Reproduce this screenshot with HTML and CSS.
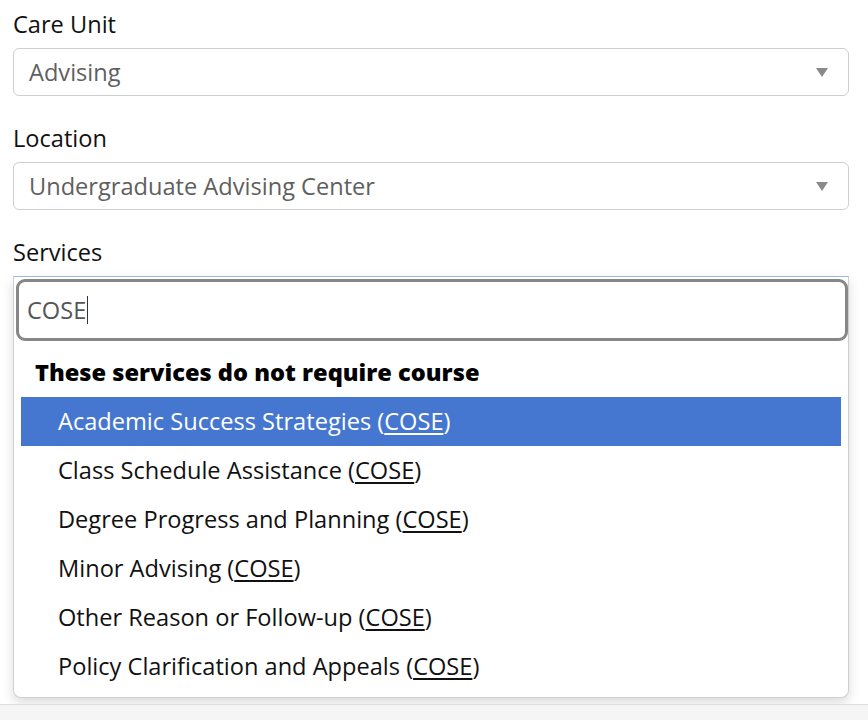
FILE: index.html
```html
<!DOCTYPE html>
<html lang="en">
<head>
<meta charset="utf-8">
<title>Services</title>
<link rel="stylesheet" href="styles.css">
</head>
<body>
<form class="form">
  <div class="field">
    <label class="label">Care Unit</label>
    <div class="select">
      <span class="select-value">Advising</span>
      <span class="select-arrow"></span>
    </div>
  </div>
  <div class="field">
    <label class="label">Location</label>
    <div class="select">
      <span class="select-value">Undergraduate Advising Center</span>
      <span class="select-arrow"></span>
    </div>
  </div>
  <div class="field field-last">
    <label class="label">Services</label>
    <div class="dropdown">
      <div class="search">
        <div class="search-input"><span class="search-text">COSE</span><span class="caret"></span></div>
      </div>
      <ul class="results">
        <li class="group">These services do not require course</li>
        <li class="option highlighted">Academic Success Strategies (<u>COSE</u>)</li>
        <li class="option">Class Schedule Assistance (<u>COSE</u>)</li>
        <li class="option">Degree Progress and Planning (<u>COSE</u>)</li>
        <li class="option">Minor Advising (<u>COSE</u>)</li>
        <li class="option">Other Reason or Follow-up (<u>COSE</u>)</li>
        <li class="option">Policy Clarification and Appeals (<u>COSE</u>)</li>
      </ul>
    </div>
  </div>
</form>
<div class="footer-bar"></div>
</body>
</html>
```

FILE: styles.css
```css
html, body {
  margin: 0;
  padding: 0;
  background: #fff;
}
body {
  font-family: "Open Sans", "Noto Sans", sans-serif;
  font-size: 23.6px;
  color: #000;
  width: 868px;
  height: 720px;
  overflow: hidden;
}
.form {
  padding: 7px 19px 0 13px;
}
.field {
  margin-bottom: 25px;
}
.field-last {
  margin-bottom: 6px;
}
.label {
  display: block;
  line-height: 34px;
  margin-bottom: 7px;
  color: #111;
}
.select {
  box-sizing: border-box;
  height: 48px;
  border: 1px solid #cfcfcf;
  border-radius: 6px;
  display: flex;
  align-items: center;
  padding: 0 20px 0 15px;
}
.select-value {
  flex: 1;
  color: #5f5f5f;
  line-height: 46px;
}
.select-arrow {
  width: 0;
  height: 0;
  border-left: 6px solid transparent;
  border-right: 6px solid transparent;
  border-top: 9px solid #8a8a8a;
}
.dropdown {
  box-sizing: border-box;
  border: 1px solid #cfcfcf;
  border-top-color: #9fb6ea;
  border-radius: 0 0 8px 8px;
  box-shadow: 0 5px 12px rgba(0, 0, 0, 0.14);
  background: #fff;
}
.search {
  padding: 2px 0 0 2px;
}
.search-input {
  box-sizing: border-box;
  height: 62px;
  border: 3px solid #878787;
  border-radius: 9px;
  display: flex;
  align-items: center;
  padding-left: 8px;
}
.search-text {
  color: #555;
  line-height: 30px;
}
.caret {
  display: inline-block;
  width: 1px;
  height: 28px;
  background: #333;
  margin-left: 1px;
}
.results {
  list-style: none;
  margin: 0;
  padding: 7px 7px 6px 7px;
}
.group {
  height: 49px;
  line-height: 49px;
  padding-left: 14px;
  font-weight: 800;
  color: #000;
}
.option {
  height: 49px;
  line-height: 49px;
  padding-left: 37px;
  color: #111;
}
.option u {
  text-decoration-thickness: 1.5px;
  text-underline-offset: 3px;
}
.option.highlighted {
  background: #4677d0;
  color: #fff;
}
.footer-bar {
  border-top: 1px solid #dcdcdc;
  background: #f5f5f5;
  height: 20px;
}
```
